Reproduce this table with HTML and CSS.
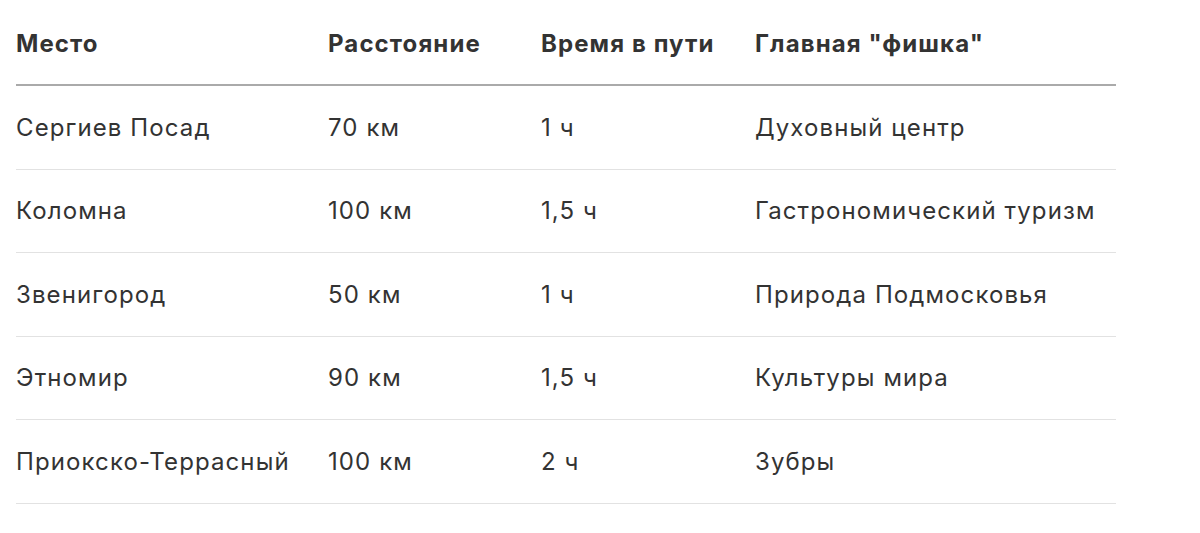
FILE: index.html
```html
<!DOCTYPE html>
<html lang="ru">
<head>
<meta charset="utf-8">
<link rel="stylesheet" href="styles.css">
</head>
<body>
<table class="tbl">
  <thead>
    <tr><th class="c1">Место</th><th class="c2">Расстояние</th><th class="c3">Время в пути</th><th class="c4">Главная "фишка"</th></tr>
  </thead>
  <tbody>
    <tr><td>Сергиев Посад</td><td>70 км</td><td>1 ч</td><td>Духовный центр</td></tr>
    <tr><td>Коломна</td><td>100 км</td><td>1,5 ч</td><td>Гастрономический туризм</td></tr>
    <tr><td>Звенигород</td><td>50 км</td><td>1 ч</td><td>Природа Подмосковья</td></tr>
    <tr><td>Этномир</td><td>90 км</td><td>1,5 ч</td><td>Культуры мира</td></tr>
    <tr><td>Приокско-Террасный</td><td>100 км</td><td>2 ч</td><td>Зубры</td></tr>
  </tbody>
</table>
</body>
</html>
```
FILE: styles.css
```css
html, body { margin: 0; background: #fff; }
body { padding: 3px 0 0 16px; font-family: Inter, "Liberation Sans", Arial, sans-serif; color: #333; }
.tbl { border-collapse: collapse; width: 1100px; table-layout: fixed; font-size: 24px; letter-spacing: 1.1px; }
.c1 { width: 312px; }
.c2 { width: 213px; }
.c3 { width: 214px; }
.tbl th, .tbl td { text-align: left; padding: 0; vertical-align: middle; white-space: nowrap; }
.tbl th { font-weight: 700; height: 81px; border-bottom: 2px solid #aaa; }
.tbl td { height: 82.5px; border-bottom: 1px solid #e2e2e2; }
```
